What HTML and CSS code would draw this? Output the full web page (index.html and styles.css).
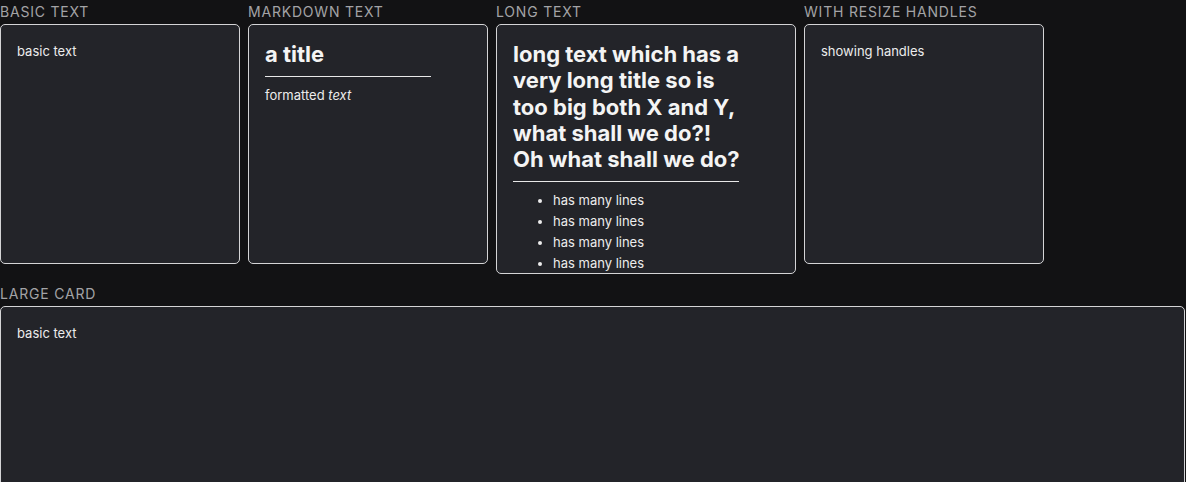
FILE: index.html
```html
<!DOCTYPE html>
<html>
<head>
<meta charset="utf-8">
<link rel="stylesheet" href="styles.css">
</head>
<body>
<div class="page">
  <div class="row">
    <section class="item">
      <div class="label">Basic text</div>
      <div class="card card-sm">
        <div class="content"><p>basic text</p></div>
      </div>
    </section>
    <section class="item">
      <div class="label">Markdown text</div>
      <div class="card card-sm">
        <div class="content md">
          <h1>a title</h1>
          <hr>
          <p>formatted <em>text</em></p>
        </div>
      </div>
    </section>
    <section class="item">
      <div class="label">Long text</div>
      <div class="card card-long">
        <div class="content md">
          <h1>long text which has a very long title so is too big both X and Y, what shall we do?! Oh what shall we do?</h1>
          <hr>
          <ul>
            <li>has many lines</li>
            <li>has many lines</li>
            <li>has many lines</li>
            <li>has many lines</li>
          </ul>
        </div>
      </div>
    </section>
    <section class="item">
      <div class="label">With resize handles</div>
      <div class="card card-sm">
        <div class="content"><p>showing handles</p></div>
      </div>
    </section>
  </div>
  <section class="item large">
    <div class="label">Large card</div>
    <div class="card card-large">
      <div class="content"><p>basic text</p></div>
    </div>
  </section>
</div>
</body>
</html>
```
FILE: styles.css
```css
html, body {
  margin: 0;
  padding: 0;
  background: #121214;
}
body {
  font-family: Inter, "Noto Sans", sans-serif;
  color: #ececec;
}
.page {
  display: flex;
  flex-direction: column;
  gap: 8px;
}
.row {
  display: flex;
  gap: 8px;
  align-items: flex-start;
}
.item {
  display: flex;
  flex-direction: column;
}
.label {
  height: 20px;
  line-height: 23px;
  margin-bottom: 4px;
  font-size: 14px;
  letter-spacing: 0.8px;
  text-transform: uppercase;
  color: #a3a3a6;
}
.card {
  box-sizing: border-box;
  background: #232429;
  border: 1px solid #d4d4d6;
  border-radius: 5px;
  overflow: hidden;
}
.card-sm {
  width: 240px;
  height: 240px;
}
.card-long {
  width: 300px;
  height: 250px;
}
.card-large {
  width: 1185px;
  height: 240px;
}
.content {
  padding: 16px;
}
.content.md {
  padding-right: 50px;
}
p {
  margin: 0;
  font-size: 13px;
  line-height: 21px;
}
h1 {
  margin: 0;
  font-size: 22px;
  line-height: 26.3px;
  font-weight: 700;
  color: #f4f4f4;
}
hr {
  margin: 9px 6px 8px 0;
  border: 0;
  border-top: 1px solid #e8e8e8;
  height: 0;
}
ul {
  margin: 0;
  padding-left: 40px;
  font-size: 13px;
  line-height: 21px;
}
em {
  font-style: italic;
}
```
